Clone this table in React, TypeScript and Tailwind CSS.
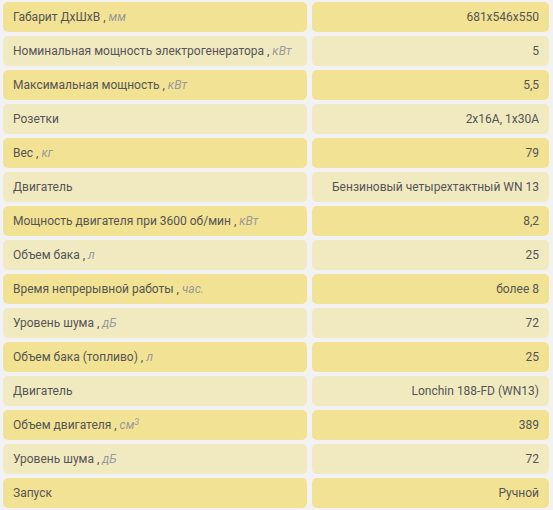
const ROWS: { label: string; unit?: React.ReactNode; value: string }[] = [
  { label: 'Габарит ДхШхВ', unit: 'мм', value: '681x546x550' },
  { label: 'Номинальная мощность электрогенератора', unit: 'кВт', value: '5' },
  { label: 'Максимальная мощность', unit: 'кВт', value: '5,5' },
  { label: 'Розетки', value: '2x16A, 1x30A' },
  { label: 'Вес', unit: 'кг', value: '79' },
  { label: 'Двигатель', value: 'Бензиновый четырехтактный WN 13' },
  { label: 'Мощность двигателя при 3600 об/мин', unit: 'кВт', value: '8,2' },
  { label: 'Объем бака', unit: 'л', value: '25' },
  { label: 'Время непрерывной работы', unit: 'час.', value: 'более 8' },
  { label: 'Уровень шума', unit: 'дБ', value: '72' },
  { label: 'Объем бака (топливо)', unit: 'л', value: '25' },
  { label: 'Двигатель', value: 'Lonchin 188-FD (WN13)' },
  { label: 'Объем двигателя', unit: <>см<sup className="text-[9px]">3</sup></>, value: '389' },
  { label: 'Уровень шума', unit: 'дБ', value: '72' },
  { label: 'Запуск', value: 'Ручной' },
];

export default function App() {
  return (
    <div
      className="w-[553px] h-[510px] bg-[#f2f2f2] pt-[2px] pl-[3px] pr-[4px] text-[12px] text-[#555] whitespace-nowrap"
      style={{ fontFamily: 'Roboto, "Noto Sans", sans-serif' }}
    >
      <div className="flex flex-col gap-[4px]">
        {ROWS.map((r, i) => {
          const bg = i % 2 === 0 ? 'bg-[#f2e293]' : 'bg-[#f1eac1]';
          return (
            <div key={i} className="flex gap-[5px] h-[30px]">
              <div className={`w-[304px] shrink-0 ${bg} rounded-[5px] flex items-center px-[10px]`}>
                <span>
                  {r.label}
                  {r.unit && (
                    <>
                      {' , '}
                      <em className="text-[#9a9a9a]">{r.unit}</em>
                    </>
                  )}
                </span>
              </div>
              <div className={`flex-1 min-w-0 ${bg} rounded-[5px] flex items-center justify-end px-[10px]`}>
                {r.value}
              </div>
            </div>
          );
        })}
      </div>
    </div>
  );
}
